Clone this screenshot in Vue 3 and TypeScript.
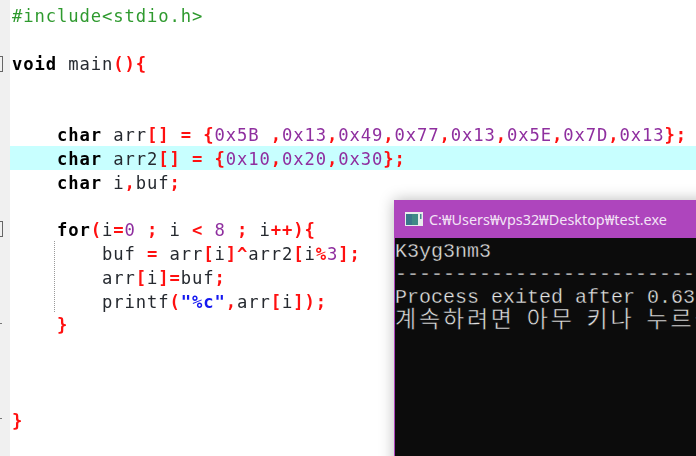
<script setup lang="ts">
type Tok = [string, string];
const lines: Tok[][] = [
  [["pp", "#include<stdio.h>"]],
  [],
  [["kw", "void"], ["id", " main"], ["sym", "(){"]],
  [],
  [],
  [["id", "    "], ["kw", "char"], ["id", " arr"], ["sym", "[] = {"], ["num", "0x5B"], ["id", " "], ["sym", ","], ["num", "0x13"], ["sym", ","], ["num", "0x49"], ["sym", ","], ["num", "0x77"], ["sym", ","], ["num", "0x13"], ["sym", ","], ["num", "0x5E"], ["sym", ","], ["num", "0x7D"], ["sym", ","], ["num", "0x13"], ["sym", "};"]],
  [["id", "    "], ["kw", "char"], ["id", " arr2"], ["sym", "[] = {"], ["num", "0x10"], ["sym", ","], ["num", "0x20"], ["sym", ","], ["num", "0x30"], ["sym", "};"]],
  [["id", "    "], ["kw", "char"], ["id", " i"], ["sym", ","], ["id", "buf"], ["sym", ";"]],
  [],
  [["id", "    "], ["kw", "for"], ["sym", "("], ["id", "i"], ["sym", "="], ["num", "0"], ["id", " "], ["sym", ";"], ["id", " i "], ["sym", "<"], ["id", " "], ["num", "8"], ["id", " "], ["sym", ";"], ["id", " i"], ["sym", "++){"]],
  [["id", "        buf "], ["sym", "="], ["id", " arr"], ["sym", "["], ["id", "i"], ["sym", "]^"], ["id", "arr2"], ["sym", "["], ["id", "i"], ["sym", "%"], ["num", "3"], ["sym", "];"]],
  [["id", "        arr"], ["sym", "["], ["id", "i"], ["sym", "]="], ["id", "buf"], ["sym", ";"]],
  [["id", "        printf"], ["sym", "("], ["str", "\"%c\""], ["sym", ","], ["id", "arr"], ["sym", "["], ["id", "i"], ["sym", "]);"]],
  [["id", "    "], ["sym", "}"]],
  [],
  [],
  [],
  [["sym", "}"]],
  [],
];
</script>

<template>
  <div class="screen">
    <div class="gutter"></div>
    <div class="code">
      <div v-for="(line, n) in lines" :key="n" class="line" :class="{ active: n === 6 }">
        <span v-for="(tok, m) in line" :key="m" :class="tok[0]">{{ tok[1] }}</span>
      </div>
    </div>

    <i class="fold fold-a"></i>
    <i class="fold fold-b"></i>
    <i class="tick tick-a"></i>
    <i class="tick tick-b"></i>
    <i class="guide"></i>

    <section class="win">
      <header class="title">
        <svg class="ico" width="18" height="16" viewBox="0 0 18 16">
          <rect x="0" y="1" width="18" height="14" fill="#e8ecec" />
          <rect x="1" y="3" width="12" height="11" fill="#3f8a86" />
          <rect x="1" y="3" width="6" height="11" fill="#37668f" opacity=".55" />
          <rect x="15" y="3" width="1.5" height="5" fill="#4a8a90" />
        </svg>
        <span class="path">C:₩Users₩vps32₩Desktop₩test.exe</span>
      </header>
      <div class="term">
        <div>K3yg3nm3</div>
        <div>--------------------------------</div>
        <div>Process exited after 0.63 seconds</div>
        <div class="ko">계속하려면 아무 키나 누르십시오</div>
      </div>
    </section>
  </div>
</template>

<style scoped>
.screen {
  position: relative;
  display: flex;
  width: 696px;
  height: 456px;
  overflow: hidden;
  background: #fff;
}
.gutter {
  flex: 0 0 10px;
  background: #f0f0f0;
}
.code {
  flex: 1;
  padding-top: 3px;
  font-family: "DejaVu Sans Mono", monospace;
  font-size: 17.2px;
  letter-spacing: 0.9px;
  white-space: pre;
}
.line {
  height: 23.8px;
  line-height: 27px;
  padding-left: 2px;
}
.line span {
  filter: blur(0.3px);
}
.active {
  background: #c8ffff;
}
.kw {
  color: #000;
  font-weight: 700;
}
.id {
  color: #262a30;
}
.sym {
  color: #ff1010;
  font-weight: 700;
}
.num {
  color: #8f2f9f;
}
.pp {
  color: #2f9a2f;
}
.str {
  color: #1418f0;
  font-weight: 700;
}
.fold {
  position: absolute;
  left: 0;
  width: 2px;
  height: 14px;
  border: 1px solid #666;
  border-left: 0;
}
.fold-a {
  top: 56px;
}
.fold-b {
  top: 221px;
}
.tick {
  position: absolute;
  left: 0;
  width: 2px;
  height: 1px;
  background: #777;
}
.tick-a {
  top: 323px;
}
.tick-b {
  top: 418px;
}
.guide {
  position: absolute;
  left: 54px;
  top: 241px;
  height: 71px;
  border-left: 1px dotted #999;
}
.win {
  position: absolute;
  left: 394px;
  top: 200px;
  width: 320px;
  height: 300px;
  background: #0c0c0c;
  border-left: 1px solid #ae45bd;
  box-shadow: 0 0 14px rgba(0, 0, 0, 0.28);
}
.title {
  display: flex;
  align-items: center;
  gap: 6px;
  height: 38px;
  margin-left: -1px;
  padding-left: 11px;
  background: #ae45bd;
}
.ico {
  flex: none;
}
.path {
  color: #f3e4f6;
  font-family: "Noto Sans", "Noto Sans CJK KR", sans-serif;
  font-size: 14.4px;
  white-space: nowrap;
}
.term {
  color: #e4e4e4;
  font-family: "Liberation Mono", monospace;
  font-size: 20px;
  line-height: 23px;
  white-space: pre;
  padding-top: 2px;
  -webkit-text-stroke: 0.35px #0c0c0c;
}
.ko {
  margin-top: -3px;
  font-family: "Noto Sans CJK KR", sans-serif;
  font-size: 23px;
  letter-spacing: 2.8px;
  word-spacing: 4px;
  -webkit-text-stroke: 0.5px #0c0c0c;
}
</style>
